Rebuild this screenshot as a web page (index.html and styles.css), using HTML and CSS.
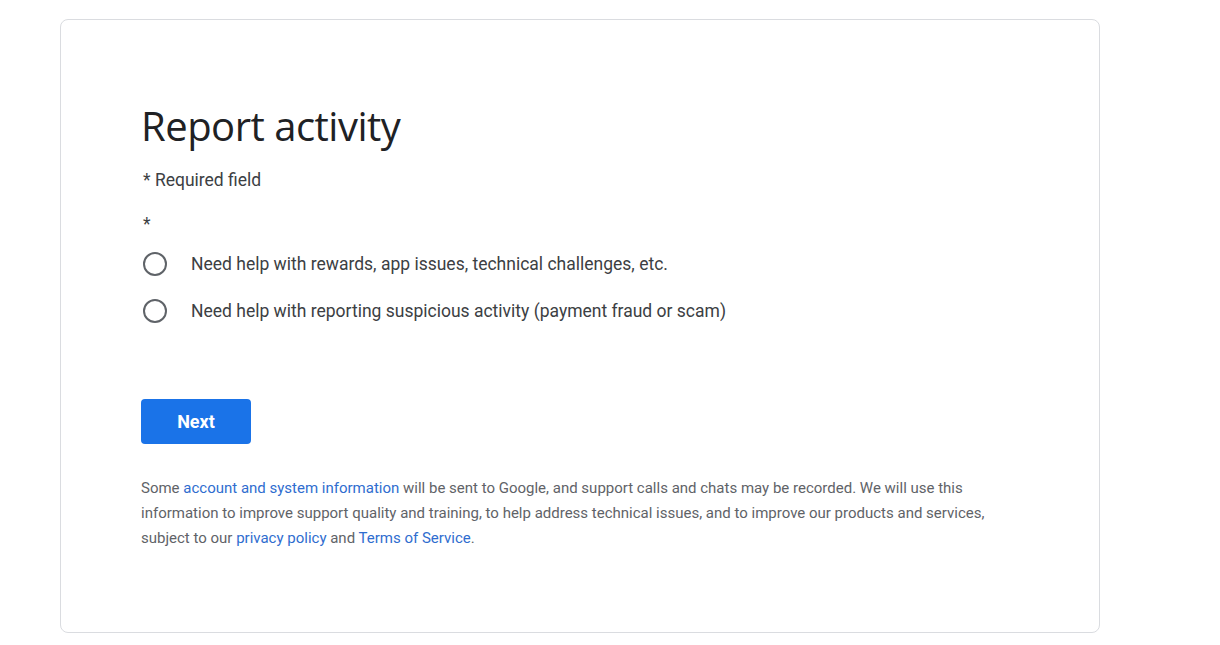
FILE: index.html
```html
<!DOCTYPE html>
<html lang="en">
<head>
    <meta charset="UTF-8">
    <meta name="viewport" content="width=device-width, initial-scale=1.0">
    <title>Report activity</title>
    <link rel="stylesheet" href="styles.css">
</head>
<body>
    <div class="card">
        <h1 class="title">Report activity</h1>
        <p class="required">* Required field</p>

        <!-- 选项 -->
        <form class="report-form">
            <div class="asterisk">*</div>
            <label class="option">
                <span class="radio"></span>
                <span>Need help with rewards, app issues, technical challenges, etc.</span>
            </label>
            <label class="option">
                <span class="radio"></span>
                <span>Need help with reporting suspicious activity (payment fraud or scam)</span>
            </label>

            <button type="button" class="next-btn">Next</button>
        </form>

        <p class="disclaimer">Some <a href="#">account and system information</a> will be sent to Google, and support calls and chats may be recorded. We will use this information to improve support quality and training, to help address technical issues, and to improve our products and services, subject to our <a href="#">privacy policy</a> and <a href="#">Terms of Service</a>.</p>
    </div>
</body>
</html>
```

FILE: styles.css
```css
body {
    margin: 0;
    padding: 19px 0 0 60px;
    font-family: Roboto, Arial, sans-serif;
    background: #fff;
}

.card {
    width: 958px;
    height: 516px;
    border: 1px solid #dadce0;
    border-radius: 8px;
    padding: 80px 0 16px 80px;
}

.title {
    margin: 0;
    font-family: "Open Sans", Arial, sans-serif;
    font-weight: 400;
    font-size: 40px;
    line-height: 52px;
    color: #202124;
    letter-spacing: -0.5px;
}

.required {
    margin: 16px 0 0 2px;
    font-size: 17.5px;
    line-height: 24px;
    color: #3c4043;
}

.report-form {
    margin-top: 20px;
}

.asterisk {
    margin: 0 0 4px 2px;
    font-size: 17.5px;
    line-height: 24px;
    color: #3c4043;
}

.option {
    display: flex;
    align-items: center;
    gap: 24px;
    height: 47px;
    font-size: 17.5px;
    color: #3c4043;
}

.radio {
    width: 20px;
    height: 20px;
    margin-left: 2px;
    border: 2px solid #5f6368;
    border-radius: 50%;
}

.next-btn {
    display: block;
    margin-top: 65px;
    width: 110px;
    height: 45px;
    border: none;
    border-radius: 4px;
    background: #1a73e8;
    color: #fff;
    font-family: Roboto, Arial, sans-serif;
    font-size: 18px;
    font-weight: 700;
}

.disclaimer {
    margin: 32px 0 0;
    width: 880px;
    font-size: 15px;
    line-height: 25px;
    color: #5f6368;
}

.disclaimer a {
    color: #2f6dcf;
    text-decoration: none;
}
```
